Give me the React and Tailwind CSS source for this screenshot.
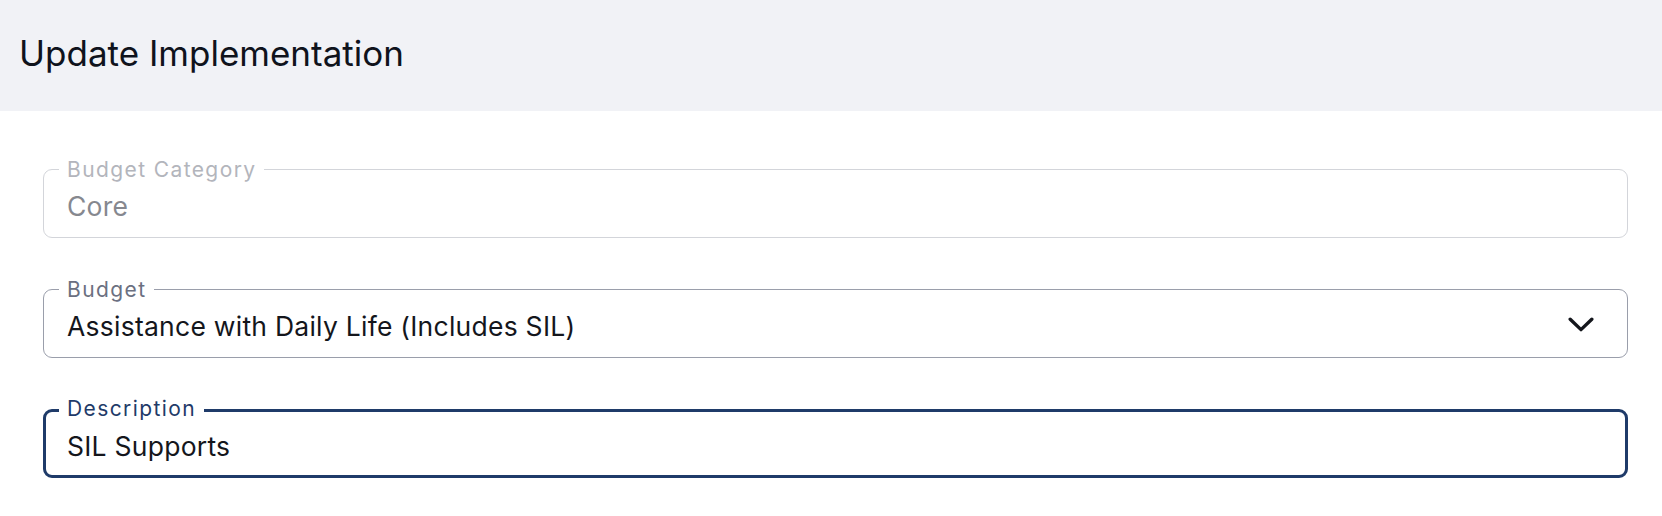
import React from "react";

const font = { fontFamily: "Inter, 'Noto Sans', sans-serif" };

const Field = ({ label, value, variant, children }) => {
  // variant: disabled | default | focused
  const box =
    variant === "focused"
      ? "border-[3px] border-[#1f3b69] px-[21px]"
      : variant === "disabled"
      ? "border border-[#d3d5da] px-[23px]"
      : "border border-[#9a9eab] px-[23px]";
  const labelPos = variant === "focused" ? "left-[13px] top-[-4px]" : "left-[15px] top-[-1px]";
  const labelColor =
    variant === "focused"
      ? "text-[#1f3b69]"
      : variant === "disabled"
      ? "text-[#b3b5bc]"
      : "text-[#6b7081]";
  const valueColor = variant === "disabled" ? "text-[#86888f]" : "text-[#14161c]";

  return (
    <div className={`relative flex h-[69px] items-center rounded-[9px] bg-white ${box}`}>
      <span
        className={`absolute -translate-y-1/2 bg-white px-[8px] text-[21px] leading-none tracking-[1.4px] ${labelPos} ${labelColor}`}
      >
        {label}
      </span>
      <span className={`flex-1 pt-[5px] text-[26.5px] leading-none tracking-[0.25px] ${valueColor}`}>
        {value}
      </span>
      {children}
    </div>
  );
};

export default function App() {
  return (
    <div className="min-h-[516px] bg-white" style={font}>
      {/* Header */}
      <div className="flex h-[111px] items-center bg-[#f1f2f6] px-[19px] pb-[4px]">
        <h1 className="text-[35px] font-normal leading-none text-[#0f131c]">Update Implementation</h1>
      </div>

      {/* Form */}
      <div className="ml-[43px] mr-[34px] mt-[58px] flex flex-col gap-[51px]">
        <Field label="Budget Category" value="Core" variant="disabled" />
        <Field label="Budget" value="Assistance with Daily Life (Includes SIL)" variant="default">
          <svg
            width="26"
            height="15"
            viewBox="0 0 26 15"
            fill="none"
            stroke="#14161c"
            strokeWidth="3.4"
            strokeLinecap="round"
            strokeLinejoin="round"
            className="mr-[10px] mt-[2px]"
          >
            <path d="M2.2 2.2 L13 12.6 L23.8 2.2" />
          </svg>
        </Field>
        <Field label="Description" value="SIL Supports" variant="focused" />
      </div>
    </div>
  );
}
